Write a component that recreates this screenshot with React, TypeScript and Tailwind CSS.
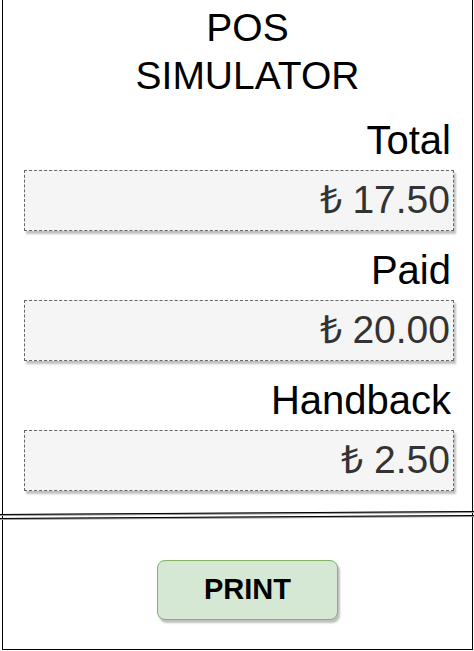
const fields = [
    { label: 'Total', value: '₺ 17.50' },
    { label: 'Paid', value: '₺ 20.00' },
    { label: 'Handback', value: '₺ 2.50' },
];

const App = () => {
    return (
        <div className="w-[474px] h-[651px] bg-white pl-[2px] pr-[1px] pb-[1px] font-['Liberation_Sans',Arial,sans-serif]">
            <div className="h-full border-x border-b border-black flex flex-col">
                <h1 className="pt-[4px] pl-[20px] text-center text-[39px] leading-[48px] text-black">
                    POS
                    <br />
                    SIMULATOR
                </h1>
                <div className="flex flex-col gap-[19px] pt-[20px] pl-[21px] pr-[18px]">
                    {fields.map((f) => (
                        <div key={f.label} className="flex flex-col">
                            <div className="text-right pr-[3px] text-[40px] leading-[40px] text-black">{f.label}</div>
                            <div className="mt-[10px] h-[61px] bg-[#f5f5f5] border border-dashed border-[#666] shadow-[2px_3px_2px_rgba(0,0,0,0.25)] flex items-center justify-end pr-[3px] text-[39px] text-[#333]">
                                {f.value}
                            </div>
                        </div>
                    ))}
                </div>
                <svg className="-ml-[3px] -mr-[2px] mt-[20px] block" width="474" height="10" viewBox="0 0 474 10">
                    <line x1="0" y1="4" x2="474" y2="1" stroke="#999" strokeWidth="2" />
                    <line x1="0" y1="8" x2="474" y2="5" stroke="#999" strokeWidth="2" />
                    <line x1="0" y1="3.5" x2="474" y2="0.5" stroke="#000" strokeWidth="1" />
                    <line x1="0" y1="7.5" x2="474" y2="4.5" stroke="#000" strokeWidth="1" />
                </svg>
                <div className="flex justify-center pt-[39px] pl-[20px]">
                    <button className="w-[181px] h-[60px] rounded-[8px] bg-[#d5e8d4] border border-[#82b366] shadow-[2px_3px_2px_rgba(0,0,0,0.25)] text-[29px] font-bold text-black">
                        PRINT
                    </button>
                </div>
            </div>
        </div>
    );
};

export default App;
